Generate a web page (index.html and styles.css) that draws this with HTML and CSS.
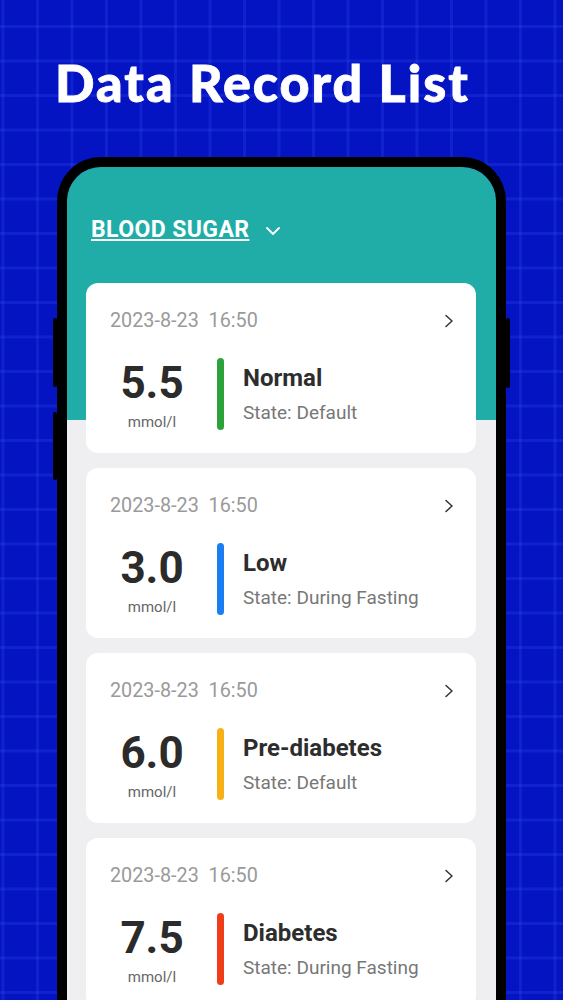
FILE: index.html
```html
<!DOCTYPE HTML>
<html>
<head>
    <title>Data Record List</title>
    <meta name="viewport" content="width=device-width, initial-scale=1">
	<meta http-equiv="content-type" content="text/html; charset=utf-8">
	<link rel="stylesheet" href="styles.css">
</head>
<body>
	<h1 class="title">Data Record List</h1>

	<div class="phone">
	  <span class="phone-btn btn-right"></span>
	  <span class="phone-btn btn-left-1"></span>
	  <span class="phone-btn btn-left-2"></span>

	  <div class="screen">
		<div class="screen-head">
		  <span class="type">BLOOD SUGAR</span>
		  <svg class="type-arrow" width="14" height="8" viewBox="0 0 14 8"><path d="M1 1l6 6 6-6" fill="none" stroke="#fff" stroke-width="1.8" stroke-linecap="round" stroke-linejoin="round"/></svg>
		</div>

		<div class="list">
		  <div class="record">
			<div class="record-top">
			  <span class="record-date">2023-8-23  16:50</span>
			  <svg class="record-more" width="10" height="14" viewBox="0 0 10 14"><path d="M2 1.5l6 5.5-6 5.5" fill="none" stroke="#333" stroke-width="1.5" stroke-linecap="round" stroke-linejoin="round"/></svg>
			</div>
			<div class="record-body">
			  <div class="reading">
				<div class="reading-value">5.5</div>
				<div class="reading-unit">mmol/l</div>
			  </div>
			  <div class="level level-normal"></div>
			  <div class="record-info">
				<div class="record-level">Normal</div>
				<div class="record-state">State: Default</div>
			  </div>
			</div>
		  </div>

		  <div class="record">
			<div class="record-top">
			  <span class="record-date">2023-8-23  16:50</span>
			  <svg class="record-more" width="10" height="14" viewBox="0 0 10 14"><path d="M2 1.5l6 5.5-6 5.5" fill="none" stroke="#333" stroke-width="1.5" stroke-linecap="round" stroke-linejoin="round"/></svg>
			</div>
			<div class="record-body">
			  <div class="reading">
				<div class="reading-value">3.0</div>
				<div class="reading-unit">mmol/l</div>
			  </div>
			  <div class="level level-low"></div>
			  <div class="record-info">
				<div class="record-level">Low</div>
				<div class="record-state">State: During Fasting</div>
			  </div>
			</div>
		  </div>

		  <div class="record">
			<div class="record-top">
			  <span class="record-date">2023-8-23  16:50</span>
			  <svg class="record-more" width="10" height="14" viewBox="0 0 10 14"><path d="M2 1.5l6 5.5-6 5.5" fill="none" stroke="#333" stroke-width="1.5" stroke-linecap="round" stroke-linejoin="round"/></svg>
			</div>
			<div class="record-body">
			  <div class="reading">
				<div class="reading-value">6.0</div>
				<div class="reading-unit">mmol/l</div>
			  </div>
			  <div class="level level-pre"></div>
			  <div class="record-info">
				<div class="record-level">Pre-diabetes</div>
				<div class="record-state">State: Default</div>
			  </div>
			</div>
		  </div>

		  <div class="record">
			<div class="record-top">
			  <span class="record-date">2023-8-23  16:50</span>
			  <svg class="record-more" width="10" height="14" viewBox="0 0 10 14"><path d="M2 1.5l6 5.5-6 5.5" fill="none" stroke="#333" stroke-width="1.5" stroke-linecap="round" stroke-linejoin="round"/></svg>
			</div>
			<div class="record-body">
			  <div class="reading">
				<div class="reading-value">7.5</div>
				<div class="reading-unit">mmol/l</div>
			  </div>
			  <div class="level level-high"></div>
			  <div class="record-info">
				<div class="record-level">Diabetes</div>
				<div class="record-state">State: During Fasting</div>
			  </div>
			</div>
		  </div>
		</div>
	  </div>
	</div>
</body>
</html>
```

FILE: styles.css
```css
* {box-sizing: border-box;}

body {
  margin: 0;
  height: 1000px;
  overflow: hidden;
  font-family: Roboto, "Liberation Sans", sans-serif;
  background-color: #0514c2;
  background-image:
    linear-gradient(90deg, rgba(60, 90, 250, 0.2) 3px, transparent 3px),
    linear-gradient(rgba(60, 90, 250, 0.2) 3px, transparent 3px);
  background-size: 34.5px 34.5px;
  background-position: 36px 25px;
}

.title {
  margin: 52px 0 0;
  padding-right: 38px;
  font-family: Lato, "Open Sans", sans-serif;
  font-weight: 900;
  font-size: 52px;
  line-height: 60px;
  letter-spacing: 2px;
  color: #fff;
  -webkit-text-stroke: 0.8px #fff;
  text-align: center;
}

/* phone frame */
.phone {
  position: relative;
  width: 449px;
  height: 870px;
  margin: 45px auto 0;
  border: 10px solid #000;
  border-bottom: none;
  border-radius: 44px 44px 0 0;
}

.phone-btn {
  position: absolute;
  width: 4px;
  background: #000;
  border-radius: 2px;
}
.btn-right { left: 439px; top: 151px; height: 70px; }
.btn-left-1 { left: -14px; top: 151px; height: 69px; }
.btn-left-2 { left: -14px; top: 245px; height: 68px; }

.screen {
  height: 100%;
  border-radius: 34px 34px 0 0;
  overflow: hidden;
  background: linear-gradient(#21ada7 253px, #efeef0 253px);
}

.screen-head {
  display: flex;
  align-items: center;
  padding: 50px 24px 40px;
}

.type {
  font-size: 23px;
  line-height: 26px;
  font-weight: 700;
  letter-spacing: 0.4px;
  color: #fff;
  text-decoration: underline;
  text-decoration-thickness: 1.5px;
  text-underline-offset: 2px;
}

.type-arrow {
  margin-left: 17px;
  margin-top: 1px;
}

.list {
  display: flex;
  flex-direction: column;
  gap: 15px;
  padding: 0 20px 0 19px;
}

.record {
  height: 170px;
  padding: 26px 24px 23px;
  background: #fff;
  border-radius: 12px;
}

.record-top {
  display: flex;
  align-items: center;
  justify-content: space-between;
  height: 24px;
}

.record-date {
  font-size: 19.8px;
  line-height: 24px;
  color: #9a9a9a;
  white-space: pre;
}

.record-more {
  margin-right: -2px;
}

.record-body {
  display: flex;
  align-items: flex-start;
  margin-top: 25px;
}

.reading {
  width: 84px;
  margin-top: 5px;
  text-align: center;
}

.reading-value {
  font-size: 44px;
  line-height: 40px;
  font-weight: 700;
  color: #2b2b2b;
}

.reading-unit {
  margin-top: 10px;
  font-size: 15px;
  line-height: 18px;
  color: #666;
}

.level {
  width: 7px;
  height: 72px;
  margin-left: 23px;
  border-radius: 4px;
}
.level-normal { background: #2ea23a; }
.level-low { background: #1a7ef2; }
.level-pre { background: #f7b116; }
.level-high { background: #ee3d18; }

.record-info {
  margin-left: 19px;
  margin-top: 5px;
}

.record-level {
  font-size: 24px;
  line-height: 30px;
  font-weight: 700;
  color: #2d2d2d;
}

.record-state {
  margin-top: 8px;
  font-size: 19px;
  line-height: 24px;
  color: #777;
}
```
